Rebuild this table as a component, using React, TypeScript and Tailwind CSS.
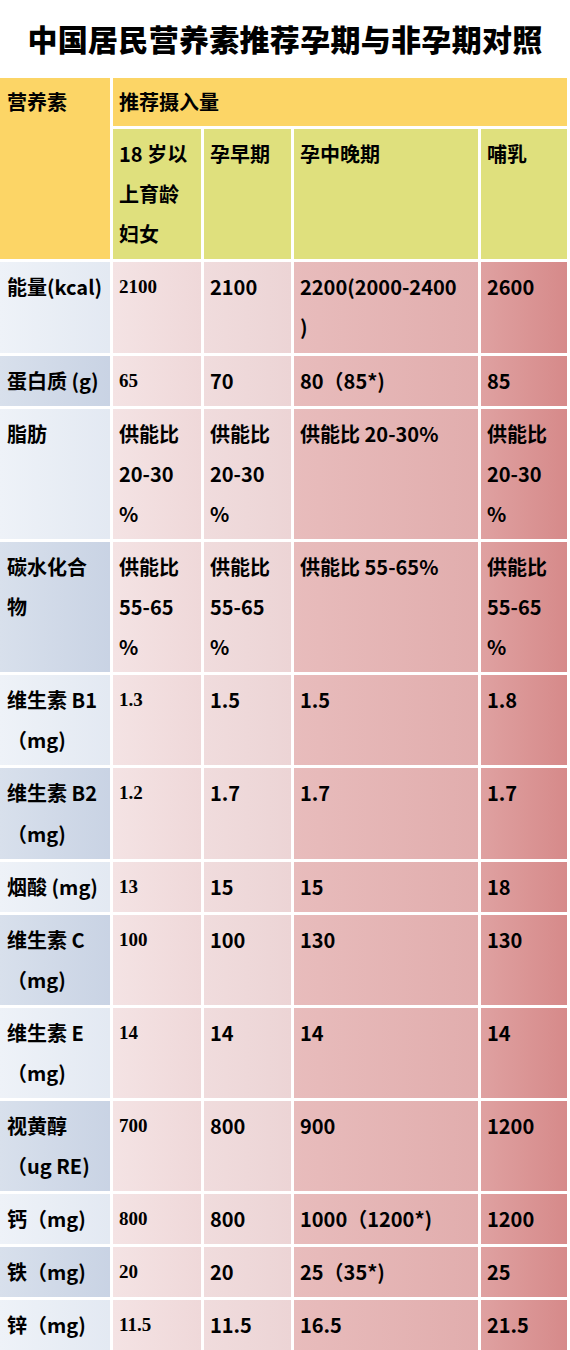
type Cell = string | string[];

interface Row {
  name: string[];
  values: [Cell, Cell, Cell, Cell];
}

const ROWS: Row[] = [
  { name: ["能量(kcal)"], values: ["2100", "2100", ["2200(2000-2400", ")"], "2600"] },
  { name: ["蛋白质 (g)"], values: ["65", "70", "80（85*)", "85"] },
  {
    name: ["脂肪"],
    values: [["供能比", "20-30", "%"], ["供能比", "20-30", "%"], "供能比 20-30%", ["供能比", "20-30", "%"]],
  },
  {
    name: ["碳水化合", "物"],
    values: [["供能比", "55-65", "%"], ["供能比", "55-65", "%"], "供能比 55-65%", ["供能比", "55-65", "%"]],
  },
  { name: ["维生素 B1", "（mg)"], values: ["1.3", "1.5", "1.5", "1.8"] },
  { name: ["维生素 B2", "（mg)"], values: ["1.2", "1.7", "1.7", "1.7"] },
  { name: ["烟酸 (mg)"], values: ["13", "15", "15", "18"] },
  { name: ["维生素 C", "（mg)"], values: ["100", "100", "130", "130"] },
  { name: ["维生素 E", "（mg)"], values: ["14", "14", "14", "14"] },
  { name: ["视黄醇", "（ug RE)"], values: ["700", "800", "900", "1200"] },
  { name: ["钙（mg)"], values: ["800", "800", "1000（1200*)", "1200"] },
  { name: ["铁（mg)"], values: ["20", "20", "25（35*)", "25"] },
  { name: ["锌（mg)"], values: ["11.5", "11.5", "16.5", "21.5"] },
];

// background per data column (cols 2-5)
const COL_BG = [
  "bg-gradient-to-r from-[#f4e3e4] to-[#efd8d9]",
  "bg-gradient-to-r from-[#f0dcdd] to-[#ecd4d5]",
  "bg-gradient-to-r from-[#e8bcbc] to-[#e1adad]",
  "bg-gradient-to-r from-[#dfa1a1] to-[#d68a8a]",
];

function Lines({ cell }: { cell: Cell }) {
  const lines = Array.isArray(cell) ? cell : [cell];
  return (
    <>
      {lines.map((l, i) => (
        <div key={i} className="whitespace-nowrap">
          {l}
        </div>
      ))}
    </>
  );
}

export default function App() {
  return (
    <div className="w-[570px] bg-white font-['Noto_Sans_CJK_SC',sans-serif] text-black">
      {/* Title */}
      <div className="h-[78px] flex items-center justify-center pb-[2px]">
        <h1 className="text-[30px] font-black tracking-[0.3px] leading-none">中国居民营养素推荐孕期与非孕期对照</h1>
      </div>

      {/* Table */}
      <div className="grid grid-cols-[110px_88px_87px_184px_86px] gap-x-[3px] gap-y-[3px] text-[20px] font-bold leading-[40.1px]">
        <div className="row-span-2 bg-[#fcd566] pl-[7px] pt-[4px]">营养素</div>
        <div className="col-span-4 bg-[#fcd566] pl-[6px] py-[4px]">推荐摄入量</div>
        <div className="bg-[#dfe07d] pl-[6px] py-[5px]">
          <Lines cell={["18 岁以", "上育龄", "妇女"]} />
        </div>
        <div className="bg-[#dfe07d] pl-[6px] py-[5px]">孕早期</div>
        <div className="bg-[#dfe07d] pl-[6px] py-[5px]">孕中晚期</div>
        <div className="bg-[#dfe07d] pl-[6px] py-[5px]">哺乳</div>

        {ROWS.map((row, r) => (
          <div key={r} className="contents">
            <div
              className={
                r % 2 === 0
                  ? "bg-gradient-to-r from-[#eef2f8] to-[#e3e9f2] pl-[7px] py-[5px]"
                  : "bg-gradient-to-r from-[#d8e0ec] to-[#c9d3e4] pl-[7px] py-[5px]"
              }
            >
              <Lines cell={row.name} />
            </div>
            {row.values.map((v, c) => (
              <div key={c} className={`${COL_BG[c]} pl-[6px] py-[5px]`}>
                {/* first data column prints plain numbers in a serif face */}
                {c === 0 && typeof v === "string" ? (
                  <div className="font-['Liberation_Serif',serif] text-[19px]">{v}</div>
                ) : (
                  <Lines cell={v} />
                )}
              </div>
            ))}
          </div>
        ))}
      </div>
    </div>
  );
}
